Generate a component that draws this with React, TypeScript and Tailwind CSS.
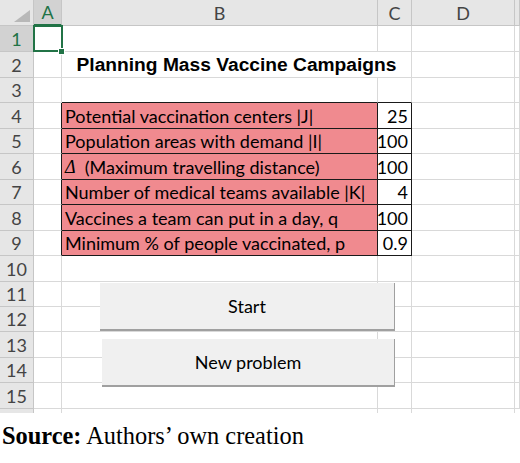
import React from 'react';

const GRID = 'border-r border-b border-[#d9d9d9]';
const HEAD = 'bg-[#e6e6e6] border-r border-b border-[#c6c6c6] text-[#444] flex items-center justify-center';

const params: { label: React.ReactNode; value: string }[] = [
  { label: 'Potential vaccination centers |J|', value: '25' },
  { label: 'Population areas with demand |I|', value: '100' },
  {
    label: (
      <>
        <span className="italic font-['Liberation_Serif',serif]">Δ</span>
        {'\u00a0\u00a0(Maximum travelling distance)'}
      </>
    ),
    value: '100',
  },
  { label: 'Number of medical teams available |K|', value: '4' },
  { label: 'Vaccines a team can put in a day, q', value: '100' },
  { label: 'Minimum % of people vaccinated, p', value: '0.9' },
];

function RowHeader({ n, active }: { n: number; active?: boolean }) {
  return (
    <div
      className={
        active
          ? 'bg-[#d2d2d2] border-r border-b border-[#c6c6c6] text-[#217346] flex items-center justify-center'
          : HEAD
      }
    >
      {n}
    </div>
  );
}

export default function App() {
  const rows = Array.from({ length: 15 }, (_, i) => i + 1);

  return (
    <div className="w-[520px] h-[463px] bg-white overflow-hidden font-['Lato','Noto_Sans',sans-serif] text-[18px] leading-[20px] text-black">
      <div className="relative">
        <div className="grid grid-cols-[34px_28px_316px_34px_103px_5px] grid-rows-[26px_26px_26px_25px_26px_25px_26px_25px_26px_25px_26px_25px_25px_26px_25px_26px_4px]">
          {/* column headers */}
          <div className="bg-[#e6e6e6] border-r border-b border-[#c6c6c6] relative">
            <svg className="absolute right-[3px] bottom-[3px]" width="16" height="12" viewBox="0 0 16 12">
              <polygon points="16,0 16,12 0,12" fill="#b8b8b8" />
            </svg>
          </div>
          <div className="bg-[#d2d2d2] border-r border-[#c6c6c6] border-b-2 border-b-[#217346] text-[#217346] flex items-center justify-center">
            A
          </div>
          <div className={HEAD}>B</div>
          <div className={HEAD}>C</div>
          <div className={HEAD}>D</div>
          <div className={HEAD} />

          {rows.map((n) => {
            const inTable = n >= 4 && n <= 9;
            const p = inTable ? params[n - 4] : null;
            const cells: React.ReactNode[] = [<RowHeader key="h" n={n} active={n === 1} />];

            if (n === 1) {
              cells.push(
                <div key="a" className={`${GRID} relative`}>
                  <div className="absolute -left-px -top-px w-[30px] h-[27px] border-2 border-[#217346]" />
                  <div className="absolute right-[-4px] bottom-[-4px] w-[7px] h-[7px] bg-[#217346] border border-white" />
                </div>,
              );
            } else if (inTable) {
              cells.push(<div key="a" className="border-b border-b-[#d9d9d9] border-r border-r-[#1a1a1a]" />);
            } else {
              cells.push(<div key="a" className={GRID} />);
            }

            if (n === 2) {
              cells.push(
                <div
                  key="b"
                  className={`${GRID} col-span-2 flex items-center justify-center font-['Liberation_Sans',Arial,sans-serif] font-bold text-[19.2px]`}
                >
                  Planning Mass Vaccine Campaigns
                </div>,
              );
            } else if (n === 3) {
              cells.push(<div key="b" className="border-r border-r-[#d9d9d9] border-b border-b-[#1a1a1a]" />);
              cells.push(<div key="c" className="border-r border-r-[#d9d9d9] border-b border-b-[#1a1a1a]" />);
            } else if (p) {
              cells.push(
                <div
                  key="b"
                  className="bg-[#f08a8f] border-r border-b border-[#1a1a1a] flex items-center pl-[3px] whitespace-nowrap"
                >
                  {p.label}
                </div>,
              );
              cells.push(
                <div key="c" className="border-r border-b border-[#1a1a1a] flex items-center justify-end pr-[3px]">
                  {p.value}
                </div>,
              );
            } else {
              cells.push(<div key="b" className={GRID} />);
              cells.push(<div key="c" className={GRID} />);
            }

            cells.push(<div key="d" className={GRID} />);
            cells.push(<div key="e" className={GRID} />);
            return <React.Fragment key={n}>{cells}</React.Fragment>;
          })}

          {/* partial row below 15 */}
          <div className="bg-[#e6e6e6] border-r border-[#c6c6c6]" />
          <div className="border-r border-[#d9d9d9]" />
          <div className="border-r border-[#d9d9d9]" />
          <div className="border-r border-[#d9d9d9]" />
          <div className="border-r border-[#d9d9d9]" />
          <div />
        </div>

        {/* form buttons floating over the sheet */}
        <button className="absolute left-[100px] top-[283px] w-[295px] h-[48px] bg-[#f0f0f0] border-r border-r-[#a0a0a0] border-b-2 border-b-[#a0a0a0] flex items-center justify-center">
          Start
        </button>
        <button className="absolute left-[102px] top-[339px] w-[293px] h-[48px] bg-[#f0f0f0] border-r border-r-[#a0a0a0] border-b-2 border-b-[#a0a0a0] flex items-center justify-center">
          New problem
        </button>
      </div>

      <div className="mt-[9px] pl-[2px] font-['Liberation_Serif','Times_New_Roman',serif] text-[24.4px] leading-[28px]">
        <span className="font-bold">Source:</span> Authors’ own creation
      </div>
    </div>
  );
}
